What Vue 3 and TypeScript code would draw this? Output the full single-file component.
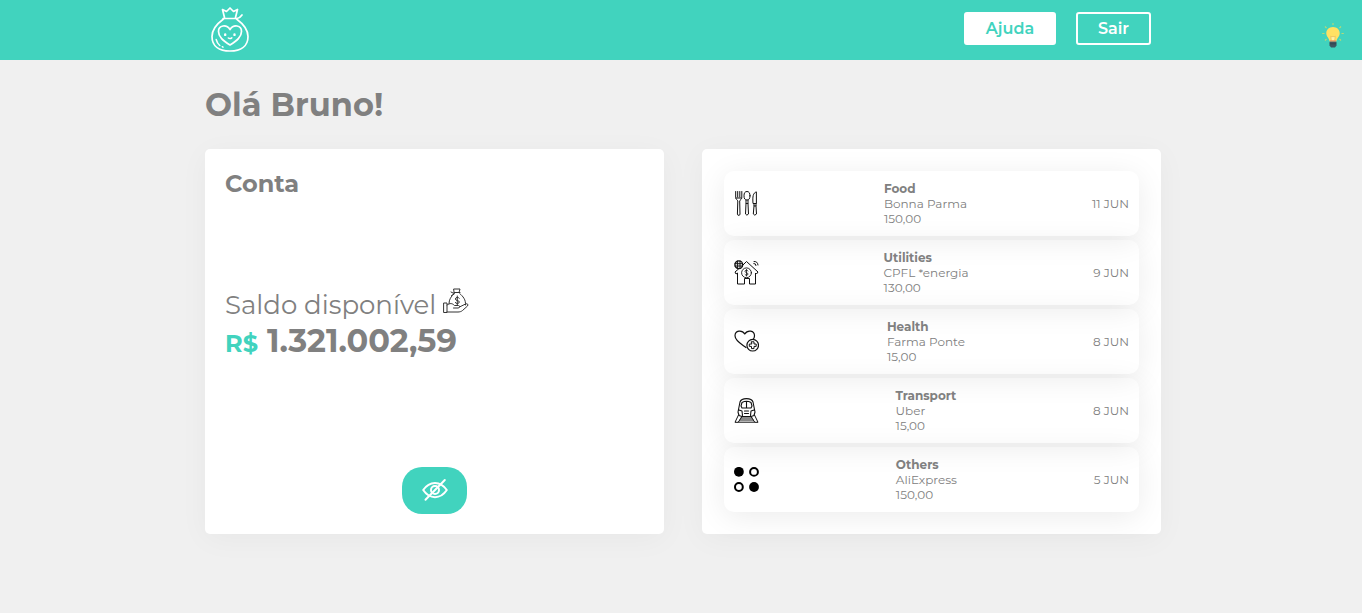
<script setup lang="ts">
type Icon = 'food' | 'home' | 'health' | 'train' | 'others'

interface Entry {
  icon: Icon
  category: string
  place: string
  amount: string
  date: string
}

const entries: Entry[] = [
  { icon: 'food', category: 'Food', place: 'Bonna Parma', amount: '150,00', date: '11 JUN' },
  { icon: 'home', category: 'Utilities', place: 'CPFL *energia', amount: '130,00', date: '9 JUN' },
  { icon: 'health', category: 'Health', place: 'Farma Ponte', amount: '15,00', date: '8 JUN' },
  { icon: 'train', category: 'Transport', place: 'Uber', amount: '15,00', date: '8 JUN' },
  { icon: 'others', category: 'Others', place: 'AliExpress', amount: '150,00', date: '5 JUN' },
]
</script>

<template>
  <div class="page">
    <header class="topbar">
      <div class="container bar">
        <svg class="logo" viewBox="0 0 50 50" fill="none" stroke="#fff" stroke-width="1.7" stroke-linecap="round" stroke-linejoin="round">
          <path d="M19.5 13.5 17.5 5.5 21.5 7.5 25 4 28.5 7.5 32.5 5.5 30.5 13.5M18 14.5H32M32 14.5Q35 14 37 11M18.5 15C13 19 7 24 7 32.5 7 42 14 47 25 47S43 42 43 32.5C43 24 37 19 31.5 15" />
          <path d="M25 41C18 36.5 13.5 33 13.5 27.5 13.5 21 21.5 20 25 25.5 28.5 20 36.5 21 36.5 27.5 36.5 33 32 36.5 25 41Z" />
          <path d="M20.2 30.5V30.9M29.5 30.5V30.9" stroke-width="2.4" />
          <path d="M23.3 34Q25 35.2 26.8 33.8M11.2 35.5Q12.2 39.5 14.8 41.5M17.3 42.7 18 43.1" stroke-width="1.5" />
        </svg>
        <nav class="actions">
          <button class="btn solid">Ajuda</button>
          <button class="btn outline">Sair</button>
        </nav>
      </div>
      <svg class="bulb" viewBox="0 0 24 26">
        <path d="M12 1V3M4 4.5 5.5 6M20 4.5 18.5 6M1.2 11.5H3.5M20.5 11.5H22.8M4 18.5 5.5 17M20 18.5 18.5 17" stroke="#b6d977" stroke-width="1.1" />
        <path d="M12 5C8 5 5.3 7.8 5.3 11.3 5.3 14.8 8.2 16 8.6 19.5H15.4C15.8 16 18.7 14.8 18.7 11.3 18.7 7.8 16 5 12 5Z" fill="#ffe163" />
        <path d="M10.3 18.5 9.7 14.2 11 15 12 14.2 13 15 14.3 14.2 13.7 18.5" fill="#fff1a4" stroke="#e5b957" stroke-width=".7" />
        <path d="M9 19H15" stroke="#ed7161" />
        <path d="M8.5 19.8H15.5V23.5L14 25.5H10L8.5 23.5Z" fill="#3e5561" />
        <path d="M8.8 21.8H15.2" stroke="#2b3c48" stroke-width=".7" />
      </svg>
    </header>

    <main class="container">
      <h1>Olá Bruno!</h1>
      <div class="cards">
        <section class="card account">
          <h2>Conta</h2>
          <div class="balance">
            <p class="caption">
              <span>Saldo disponível</span>
              <svg class="money" viewBox="0 0 26 26" fill="none" stroke="#333" stroke-width="1" stroke-linecap="round" stroke-linejoin="round">
                <path d="M11 1H17L16 4.5H11.5ZM11 4.5H17M11 5.5 8 4M11 6 8.5 7.5M11.3 5.5C8 8.5 6 11.5 6 15.5M16.7 5.5C20 8.5 23 11.5 22.5 17M1 15H4V24.5H1ZM4 17C7 15 9 15 11.5 17.5H15.5C17 17.5 17 20 15 20H10.5M16.5 19 22.5 16C24.5 15.2 25.5 16.5 24.5 18L19.5 22.5C18.5 23.5 16.5 24 15 24H4" />
                <path d="M16.3 10.2C15.5 9 12.5 9 12.4 11 12.4 13 16.3 12 16.3 14 16.2 16 13 16 12.2 14.5M14.3 8V16.8" />
              </svg>
            </p>
            <p class="total"><span class="currency">R$</span> 1.321.002,59</p>
          </div>
          <button class="toggle" aria-label="Ocultar saldo">
            <svg viewBox="0 0 26 24" fill="none" stroke="#fff" stroke-width="2" stroke-linecap="round">
              <path d="M1.2 12C7.5 2.5 18.5 2.5 24.8 12 18.5 21.5 7.5 21.5 1.2 12Z" stroke-linejoin="round" />
              <circle cx="13" cy="12" r="4" />
              <path d="M3.5 21.8 22.8 2" />
            </svg>
          </button>
        </section>

        <section class="card">
          <ul class="entries">
            <li v-for="entry in entries" :key="entry.category" class="entry">
              <svg class="icon" viewBox="0 0 25 25" fill="none" stroke="#111" stroke-width="1" stroke-linecap="round" stroke-linejoin="round">
                <template v-if="entry.icon === 'food'">
                  <path d="M1.7 .5V6.5C1.7 8.5 3.5 8.8 3.8 10L3.4 23.2Q3.6 24.5 5 24.3 6.2 24 6 23L5.7 10C6 8.7 7.8 8.5 7.8 6.5V.5M3.7 .5V6M5.8 .5V6M2 7H7.5" />
                  <ellipse cx="13" cy="4.8" rx="3" ry="4.3" />
                  <path d="M12 9V12.5H14V9M12 12.5 11.5 23Q12.8 25.3 14.5 23L14 12.5M22 1C19 2 18.5 5.5 19 12.5H22ZM20 12.5V15H22V12.5M20 15 19.3 23Q20.7 25.3 22.5 23L22 15" />
                </template>
                <template v-else-if="entry.icon === 'home'">
                  <path d="M8 6 12.5 1.5 24 12 22.5 14 21.5 13V24H15.5V18.5H10.5V24H3.5V13L2 14 1 12 4.5 9M20 1.5Q23.5 1 24 5M19.8 3.5Q22 3.2 22 5.5" />
                  <circle cx="4.8" cy="4.8" r="3.9" stroke-width="1.3" />
                  <path d="M1 3.7H8.5M1 6H8.5M3.6 1V8.5M6 1V8.5" />
                  <circle cx="12.5" cy="12.8" r="4.9" stroke-width=".9" />
                  <path d="M14 11C13 9.7 11 10 11 11.4 11.2 13 14 12.5 14 14 13.9 15.7 11.7 15.6 11 14.5M12.5 9.5V16" stroke-width=".8" />
                </template>
                <template v-else-if="entry.icon === 'health'">
                  <path d="M12 18.5C8 15.5 1 12 1 6.8 1 1.2 8 .5 10.8 5 13.5.5 20.5 1.2 20.5 6.8Q20.5 8.5 19.5 10" stroke-width="1.2" />
                  <circle cx="18.7" cy="16.2" r="5.8" stroke-width="1.2" />
                  <path d="M17.5 12.8H20V15H22.2V17.4H20V19.6H17.5V17.4H15.3V15H17.5Z" />
                </template>
                <template v-else-if="entry.icon === 'train'">
                  <path d="M5 17.5 4 14 6 4C7 1 9 .6 12.5 .6S18 1 19 4L21 14 20 17.5 17 18.5H8ZM7 8 8 4.5Q12.5 2 17 4.5L18 8 17 10H8ZM12.5 3.3V10M5 12 8 13 8.5 17.5M20 12 17 13 16.5 17.5M10.5 13H14.5M10.5 15.5H14.5" stroke-width="1.1" />
                  <path d="M4.5 17 1 24.3H4.2L8 18.5M20.5 17 24 24.3H20.8L17 18.5M7 20H18M5.8 22H19.2M4.5 24.2H20.5" />
                </template>
                <template v-else>
                  <circle cx="4.9" cy="4.8" r="4.9" fill="#000" stroke="none" />
                  <circle cx="20" cy="20" r="4.9" fill="#000" stroke="none" />
                  <circle cx="20" cy="4.9" r="3.9" stroke="#000" stroke-width="2" />
                  <circle cx="4.9" cy="20" r="3.9" stroke="#000" stroke-width="2" />
                </template>
              </svg>
              <div class="detail">
                <strong>{{ entry.category }}</strong>
                <span>{{ entry.place }}</span>
                <span>{{ entry.amount }}</span>
              </div>
              <time>{{ entry.date }}</time>
            </li>
          </ul>
        </section>
      </div>
    </main>
  </div>
</template>

<style>
body {
  background: #f0f0f0;
}
</style>

<style scoped>
.page {
  min-height: 613px;
  background: #f0f0f0;
  color: #808080;
  font-family: Montserrat, Inter, "Liberation Sans", sans-serif;
}
.container {
  width: 956px;
  margin-left: 205px;
}
.topbar {
  position: relative;
  height: 60px;
  background: #41d3be;
}
.bar {
  display: flex;
  align-items: center;
  justify-content: space-between;
  height: 57px;
}
.logo {
  width: 50px;
  height: 50px;
  margin-top: 1px;
}
.actions {
  display: flex;
  gap: 20px;
  padding-right: 10px;
}
.btn {
  box-sizing: border-box;
  height: 33px;
  padding: 0;
  border: 2px solid #fff;
  border-radius: 3px;
  font: 600 16px/29px Montserrat, Inter, sans-serif;
}
.solid {
  width: 92px;
  background: #fff;
  color: #41d3be;
}
.outline {
  width: 75px;
  background: transparent;
  color: #fff;
}
.bulb {
  position: absolute;
  top: 22px;
  right: 17px;
  width: 24px;
  height: 26px;
}
h1,
h2,
p,
ul {
  margin: 0;
  padding: 0;
}
h1 {
  padding-top: 25px;
  height: 64px;
  font-size: 32px;
  line-height: 39px;
  font-weight: 700;
}
.cards {
  display: flex;
  gap: 38px;
}
.card {
  box-sizing: border-box;
  width: 459px;
  height: 385px;
  border-radius: 5px;
  background: #fff;
  box-shadow: 0 5px 30px rgba(0, 0, 0, 0.04);
}
.account {
  display: flex;
  flex-direction: column;
  justify-content: space-between;
  padding: 20px;
}
h2 {
  font-size: 24px;
  line-height: 29px;
  font-weight: 700;
}
.balance {
  padding-bottom: 14px;
}
.caption {
  display: flex;
  align-items: center;
  gap: 7px;
  height: 32px;
  font-size: 26px;
  line-height: 32px;
  font-weight: 400;
}
.money {
  width: 26px;
  height: 26px;
  margin-top: -7px;
}
.total {
  font-size: 32px;
  line-height: 39px;
  font-weight: 700;
}
.currency {
  color: #41d3be;
  font-size: 24px;
}
.toggle {
  display: flex;
  align-items: center;
  justify-content: center;
  align-self: center;
  width: 65px;
  height: 47px;
  padding: 0 0 2px;
  border: 0;
  border-radius: 20px;
  background: #41d3be;
}
.toggle svg {
  width: 26px;
  height: 24px;
}
.entries {
  display: flex;
  flex-direction: column;
  gap: 4px;
  padding: 22px;
  list-style: none;
}
.entry {
  box-sizing: border-box;
  display: flex;
  align-items: center;
  justify-content: space-between;
  height: 65px;
  padding: 10px;
  border-radius: 10px;
  box-shadow: 0 5px 30px rgba(0, 0, 0, 0.08);
  font-size: 12px;
  line-height: 15px;
}
.icon {
  width: 25px;
  height: 25px;
}
.detail {
  display: flex;
  flex-direction: column;
  align-items: flex-start;
}
strong {
  font-weight: 700;
}
</style>
